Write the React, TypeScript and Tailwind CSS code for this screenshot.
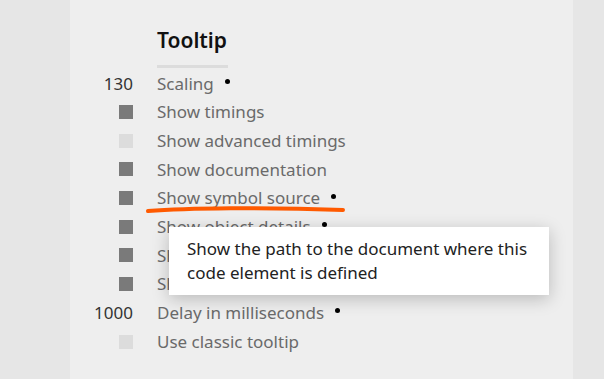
import React from "react";

type Row = {
  value?: string;
  box?: "on" | "off";
  label: string;
  dot?: boolean;
};

const rows: Row[] = [
  { value: "130", label: "Scaling", dot: true },
  { box: "on", label: "Show timings" },
  { box: "off", label: "Show advanced timings" },
  { box: "on", label: "Show documentation" },
  { box: "on", label: "Show symbol source", dot: true },
  { box: "on", label: "Show object details", dot: true },
  { box: "on", label: "Show inheritance" },
  { box: "on", label: "Show lazy summaries" },
  { value: "1000", label: "Delay in milliseconds", dot: true },
  { box: "off", label: "Use classic tooltip" },
];

export default function App() {
  return (
    <div
      className="w-[604px] h-[379px] bg-[#e6e6e6] flex overflow-hidden"
      style={{ fontFamily: '"Noto Sans", "Open Sans", sans-serif' }}
    >
      <div className="relative ml-[70px] w-[503px] h-full bg-[#eeeeee]">
        <div className="pt-[26px] pl-[87px]">
          <h2 className="text-[21px] leading-[28px] font-semibold text-[#111] w-fit">
            Tooltip
          </h2>
          <div className="mt-[11px] w-[71px] h-[3px] bg-[#dcdcdc]" />
        </div>

        <div className="mt-[1px] flex flex-col">
          {rows.map((r) => (
            <div key={r.label} className="h-[28.7px] flex items-center">
              <div className="w-[63px] flex justify-end text-[17px] text-[#333]">
                {r.value ? (
                  <span>{r.value}</span>
                ) : (
                  <span
                    className={
                      r.box === "on"
                        ? "w-[14px] h-[14px] bg-[#7a7a7a]"
                        : "w-[14px] h-[14px] bg-[#dcdcdc]"
                    }
                  />
                )}
              </div>
              <span className="ml-[24px] text-[17px] text-[#6a6a6a] whitespace-nowrap">
                {r.label}
              </span>
              {r.dot && (
                <span className="ml-[11px] -mt-[4px] w-[5px] h-[5px] rounded-full bg-black" />
              )}
            </div>
          ))}
        </div>

        <svg
          className="absolute left-[76px] top-[204px]"
          width="200"
          height="12"
          viewBox="0 0 200 12"
        >
          <path
            d="M2 7 C 40 4, 120 3, 197 6"
            stroke="#ff5a00"
            strokeWidth="4"
            strokeLinecap="round"
            fill="none"
          />
        </svg>

        <div className="absolute left-[99px] top-[227px] w-[380px] h-[68px] bg-white shadow-[0_4px_16px_rgba(0,0,0,0.22)] px-[18px] pt-[10px] text-[17px] leading-[24px] text-[#222]">
          Show the path to the document where this code element is defined
        </div>
      </div>
    </div>
  );
}
